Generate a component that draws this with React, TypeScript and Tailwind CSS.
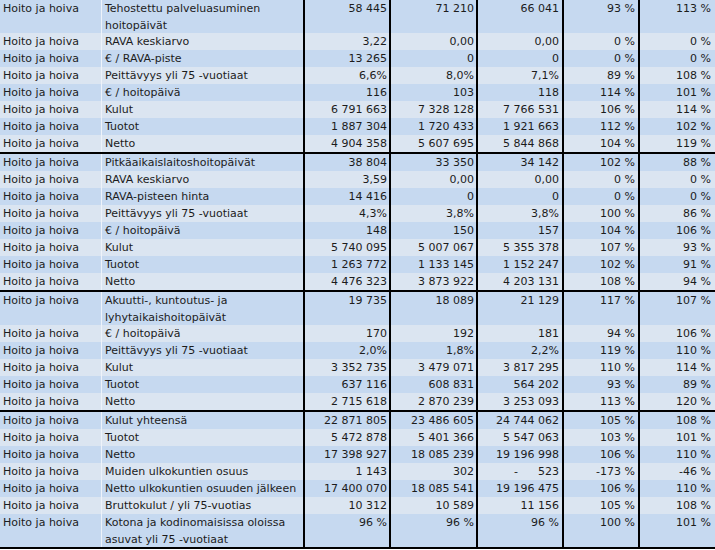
import React from "react";

type Row = { label: React.ReactNode; vals: React.ReactNode[]; double?: boolean };

const g1: Row[] = [
  { label: <>Tehostettu palveluasuminen<br />hoitopäivät</>, vals: ["58 445", "71 210", "66 041", "93 %", "113 %"], double: true },
  { label: "RAVA keskiarvo", vals: ["3,22", "0,00", "0,00", "0 %", "0 %"] },
  { label: "€ / RAVA-piste", vals: ["13 265", "0", "0", "0 %", "0 %"] },
  { label: "Peittävyys yli 75 -vuotiaat", vals: ["6,6%", "8,0%", "7,1%", "89 %", "108 %"] },
  { label: "€ / hoitopäivä", vals: ["116", "103", "118", "114 %", "101 %"] },
  { label: "Kulut", vals: ["6 791 663", "7 328 128", "7 766 531", "106 %", "114 %"] },
  { label: "Tuotot", vals: ["1 887 304", "1 720 433", "1 921 663", "112 %", "102 %"] },
  { label: "Netto", vals: ["4 904 358", "5 607 695", "5 844 868", "104 %", "119 %"] },
];

const g2: Row[] = [
  { label: "Pitkäaikaislaitoshoitopäivät", vals: ["38 804", "33 350", "34 142", "102 %", "88 %"] },
  { label: "RAVA keskiarvo", vals: ["3,59", "0,00", "0,00", "0 %", "0 %"] },
  { label: "RAVA-pisteen hinta", vals: ["14 416", "0", "0", "0 %", "0 %"] },
  { label: "Peittävyys yli 75 -vuotiaat", vals: ["4,3%", "3,8%", "3,8%", "100 %", "86 %"] },
  { label: "€ / hoitopäivä", vals: ["148", "150", "157", "104 %", "106 %"] },
  { label: "Kulut", vals: ["5 740 095", "5 007 067", "5 355 378", "107 %", "93 %"] },
  { label: "Tuotot", vals: ["1 263 772", "1 133 145", "1 152 247", "102 %", "91 %"] },
  { label: "Netto", vals: ["4 476 323", "3 873 922", "4 203 131", "108 %", "94 %"] },
];

const g3: Row[] = [
  { label: <>Akuutti-, kuntoutus- ja<br />lyhytaikaishoitopäivät</>, vals: ["19 735", "18 089", "21 129", "117 %", "107 %"], double: true },
  { label: "€ / hoitopäivä", vals: ["170", "192", "181", "94 %", "106 %"] },
  { label: "Peittävyys yli 75 -vuotiaat", vals: ["2,0%", "1,8%", "2,2%", "119 %", "110 %"] },
  { label: "Kulut", vals: ["3 352 735", "3 479 071", "3 817 295", "110 %", "114 %"] },
  { label: "Tuotot", vals: ["637 116", "608 831", "564 202", "93 %", "89 %"] },
  { label: "Netto", vals: ["2 715 618", "2 870 239", "3 253 093", "113 %", "120 %"] },
];

const g4: Row[] = [
  { label: "Kulut yhteensä", vals: ["22 871 805", "23 486 605", "24 744 062", "105 %", "108 %"] },
  { label: "Tuotot", vals: ["5 472 878", "5 401 366", "5 547 063", "103 %", "101 %"] },
  { label: "Netto", vals: ["17 398 927", "18 085 239", "19 196 998", "106 %", "110 %"] },
  {
    label: "Muiden ulkokuntien osuus",
    vals: [
      "1 143",
      "302",
      <span className="flex justify-between pl-[36px]"><span>-</span><span>523</span></span>,
      "-173 %",
      "-46 %",
    ],
  },
  { label: "Netto ulkokuntien osuuden jälkeen", vals: ["17 400 070", "18 085 541", "19 196 475", "106 %", "110 %"] },
  { label: "Bruttokulut / yli 75-vuotias", vals: ["10 312", "10 589", "11 156", "105 %", "108 %"] },
  { label: <>Kotona ja kodinomaisissa oloissa<br />asuvat yli 75 -vuotiaat</>, vals: ["96 %", "96 %", "96 %", "100 %", "101 %"], double: true },
];

const valCls = [
  "w-[86px] border-r-2 border-black pr-[2px]",
  "w-[87px] border-r-2 border-black pr-[2px]",
  "w-[86px] border-r-2 border-black pr-[3px]",
  "w-[76px] border-r-2 border-black pr-[3px]",
  "w-[75px] pr-[4px]",
];

function Group({ rows }: { rows: Row[] }) {
  return (
    <div className="flex flex-col">
      {rows.map((r, i) => (
        <div
          key={i}
          className={
            "flex " +
            (r.double ? "h-[33px] " : "h-[17px] ") +
            (i % 2 === 0 ? "bg-[#c6d9f0]" : "bg-[#dbe5f1]")
          }
        >
          <div className="w-[102px] shrink-0 border-r border-[#eef3fa] pl-[3px] whitespace-nowrap">Hoito ja hoiva</div>
          <div className="w-[203px] shrink-0 border-r-2 border-black pl-[3px] whitespace-nowrap">{r.label}</div>
          {r.vals.map((v, j) => (
            <div key={j} className={"shrink-0 text-right whitespace-nowrap " + valCls[j]}>
              {v}
            </div>
          ))}
        </div>
      ))}
    </div>
  );
}

export default function App() {
  return (
    <div
      className="w-[715px] h-[550px] overflow-hidden bg-white text-[11px] leading-[17px] text-[#1c1c1c]"
      style={{ fontFamily: '"DejaVu Sans", Verdana, sans-serif' }}
    >
      <Group rows={g1} />
      <div className="h-[2px] bg-black" />
      <Group rows={g2} />
      <div className="h-[2px] bg-black" />
      <Group rows={g3} />
      <div className="h-[2px] bg-black" />
      <Group rows={g4} />
      <div className="h-[2px] bg-black" />
    </div>
  );
}
